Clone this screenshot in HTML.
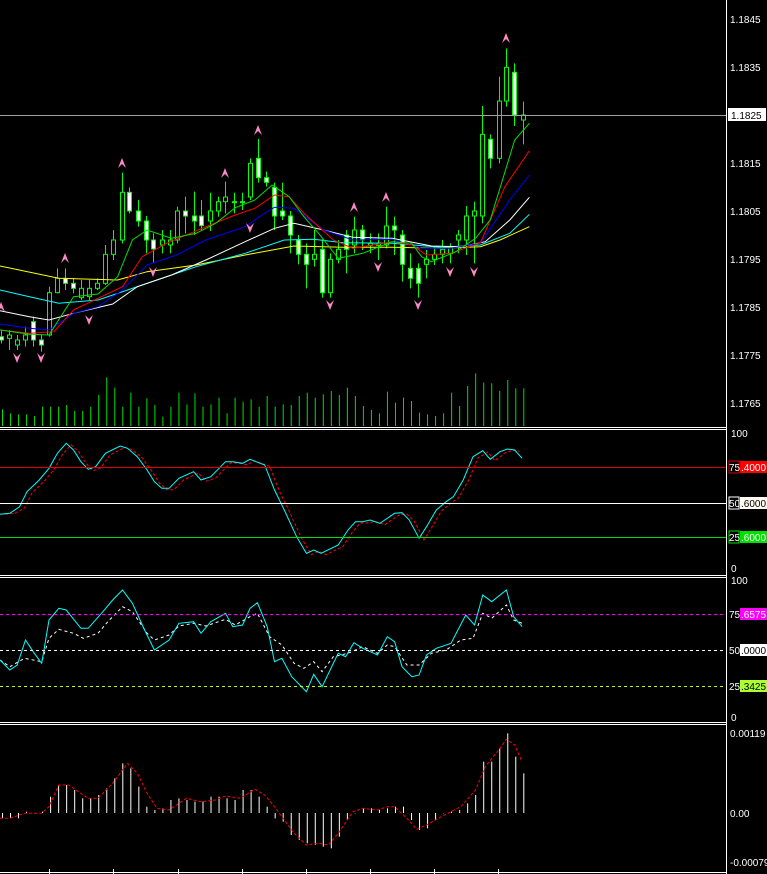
<!DOCTYPE html>
<html><head><meta charset="utf-8"><style>
html,body{margin:0;padding:0;background:#000;width:767px;height:874px;overflow:hidden}
svg{display:block}
text{font-family:"Liberation Sans",sans-serif;font-size:10px;fill:#fff}
</style></head><body>
<svg id="s" width="767" height="874" viewBox="0 0 767 874" xmlns="http://www.w3.org/2000/svg">
<rect width="767" height="874" fill="#000"/>
<g id="g"></g>
<line x1="0" y1="427.5" x2="727" y2="427.5" stroke="#fff"/>
<line x1="0" y1="429.5" x2="727" y2="429.5" stroke="#fff"/>
<line x1="0" y1="575.5" x2="727" y2="575.5" stroke="#fff"/>
<line x1="0" y1="577.5" x2="727" y2="577.5" stroke="#fff"/>
<line x1="0" y1="722.5" x2="727" y2="722.5" stroke="#fff"/>
<line x1="0" y1="724.5" x2="727" y2="724.5" stroke="#fff"/>
<line x1="0" y1="872.5" x2="727" y2="872.5" stroke="#fff"/>
<line x1="726.5" y1="0" x2="726.5" y2="874" stroke="#fff"/>
<line x1="0" y1="115.5" x2="726" y2="115.5" stroke="#a0a0a0"/>
<rect x="728" y="108" width="38" height="13" fill="#fff"/>
<text x="731" y="119" style="fill:#000">1.1825</text>
<text x="730" y="23">1.1845</text>
<text x="730" y="71">1.1835</text>
<text x="730" y="167">1.1815</text>
<text x="730" y="215">1.1805</text>
<text x="730" y="263">1.1795</text>
<text x="730" y="311">1.1785</text>
<text x="730" y="359">1.1775</text>
<text x="730" y="407">1.1765</text>
<line x1="0" y1="467.5" x2="726" y2="467.5" stroke="#e00000"/>
<line x1="0" y1="503.5" x2="726" y2="503.5" stroke="#fff"/>
<line x1="0" y1="537.5" x2="726" y2="537.5" stroke="#00e000"/>
<text x="731" y="437">100</text>
<rect x="729" y="461" width="10" height="12" fill="#000" stroke="#e00000"/><text x="729" y="471">75</text>
<rect x="740" y="461" width="27" height="12" fill="#f00"/><text x="741" y="471">.4000</text>
<rect x="729" y="497" width="10" height="12" fill="#000" stroke="#fff"/><text x="729" y="507">50</text>
<rect x="740" y="497" width="27" height="12" fill="#fffbf0"/><text x="741" y="507" style="fill:#000">.6000</text>
<rect x="729" y="531" width="10" height="12" fill="#000" stroke="#00e000"/><text x="729" y="541">25</text>
<rect x="740" y="531" width="27" height="12" fill="#00e000"/><text x="741" y="541">.6000</text>
<text x="731" y="572">0</text>
<line x1="0" y1="614.5" x2="726" y2="614.5" stroke="#ff00ff" stroke-dasharray="3,3"/>
<line x1="0" y1="650.5" x2="726" y2="650.5" stroke="#fff" stroke-dasharray="3,3"/>
<line x1="0" y1="686.5" x2="726" y2="686.5" stroke="#c0ff00" stroke-dasharray="3,3"/>
<text x="731" y="584">100</text>
<text x="729" y="618">75</text><rect x="740" y="608" width="27" height="12" fill="#ff00ff"/><text x="741" y="618">.6575</text>
<text x="729" y="654">50</text><rect x="740" y="644" width="27" height="12" fill="#fff"/><text x="741" y="654" style="fill:#000">.0000</text>
<text x="729" y="690">25</text><rect x="740" y="680" width="27" height="12" fill="#adff2f"/><text x="741" y="690" style="fill:#000">.3425</text>
<text x="731" y="721">0</text>
<text x="730" y="737">0.00119</text>
<text x="730" y="817">0.00</text>
<text x="730" y="866">-0.00079</text>
</svg>
<script>
var g=document.getElementById('g');var NS='http://www.w3.org/2000/svg';
function el(t,a){var e=document.createElementNS(NS,t);for(var k in a)e.setAttribute(k,a[k]);g.appendChild(e);return e;}
function X(i){return 2.5+8.02*i;}
var vt=[1228,1240,1243,1243,1248,1220,1220,1220,1215,1233,1233,1220,1185,1132,1163,1220,1178,1220,1195,1215,1250,1220,1178,1213,1180,1220,1213,1193,1240,1193,1205,1198,1220,1188,1220,1213,1215,1188,1178,1193,1183,1173,1185,1163,1188,1218,1230,1240,1175,1208,1193,1203,1238,1243,1248,1240,1178,1218,1158,1120,1148,1150,1173,1140,1165,1165];
for(var i=0;i<66;i++){el('line',{x1:X(i),x2:X(i),y1:426,y2:vt[i]/3,stroke:'#00e000'});}
var c=[[3,1010,1020,1,990,1030],[19,1005,1015,0,990,1050],[35,1020,1035,0,1005,1050],[52,1005,1020,0,980,1040],[68,965,1020,1,950,1040],[84,1020,1035,1,1005,1055],[100,878,1005,0,860,1010],[117,835,878,0,805,880],[133,835,850,1,805,870],[149,850,865,1,835,880],[166,865,893,0,840,900],[182,865,890,0,840,900],[198,850,865,0,835,870],[215,763,850,0,735,855],[231,720,763,0,690,780],[248,577,720,0,518,730],[264,577,633,1,562,640],[281,633,663,1,600,680],[297,663,720,1,648,760],[313,720,747,1,700,790],[330,720,735,0,690,760],[346,720,735,0,690,760],[362,633,720,0,620,730],[378,633,648,1,590,700],[395,648,663,1,575,705],[411,648,677,1,600,690],[428,633,663,0,578,693],[444,605,633,0,590,650],[460,591,605,0,545,640],[477,605,606,0,578,640],[493,605,606,0,578,630],[510,490,591,0,475,600],[526,475,533,1,417,548],[542,533,547,1,515,560],[558,562,648,1,548,690],[575,633,648,1,548,660],[591,648,705,1,633,760],[608,720,763,1,705,793],[624,763,793,1,730,865],[640,763,778,0,690,800],[656,748,878,1,718,893],[673,778,878,0,760,893],[689,748,778,0,720,790],[705,705,748,1,690,820],[722,690,735,0,650,760],[738,690,720,1,675,750],[754,730,736,0,700,760],[771,730,736,0,700,780],[787,678,735,0,620,745],[803,678,690,1,650,765],[820,705,793,1,690,845],[836,805,835,1,760,865],[853,805,850,1,790,893],[869,778,793,0,750,835],[885,763,778,0,740,795],[902,748,763,0,720,790],[918,740,760,0,730,790],[934,705,720,0,690,760],[951,648,720,0,618,765],[967,633,648,0,605,790],[984,403,648,0,318,670],[1000,418,475,1,403,505],[1017,303,475,0,230,490],[1033,202,303,0,145,320],[1049,217,345,1,190,378],[1066,345,360,0,305,433]];
c.forEach(function(d){var x=Math.round(d[0]/2.04)+0.5;el('line',{x1:x,x2:x,y1:d[4]/3,y2:d[5]/3,stroke:'#00ff00'});var h=Math.max(1,(d[2]-d[1])/3);el('rect',{x:x-2,y:d[1]/3,width:4,height:h,fill:d[3]?'#fff':'#000',stroke:'#00ff00'});});
function pl(pts,col,dash,sx,sy,oy){var s=pts.map(function(p){return (p[0]/sx).toFixed(1)+','+(p[1]/sy+oy).toFixed(1)}).join(' ');var a={points:s,fill:'none',stroke:col,'stroke-width':1};if(dash)a['stroke-dasharray']=dash;el('polyline',a);}
pl([[0,798],[120,835],[240,840],[300,815],[400,795],[500,765],[600,738],[700,742],[800,742],[900,745],[980,740],[1020,720],[1080,680]],'#ffff00',0,2.04,3,0);
pl([[0,870],[60,890],[120,910],[200,900],[260,870],[320,840],[400,800],[500,760],[580,720],[640,718],[700,728],[800,730],[900,742],[980,735],[1040,700],[1080,643]],'#00ffff',0,2.04,3,0);
pl([[0,932],[60,950],[100,960],[150,940],[230,912],[280,860],[350,825],[420,780],[500,725],[560,685],[600,670],[660,690],[720,712],[800,715],[880,738],[940,740],[990,725],[1040,660],[1080,592]],'#ffffff',0,2.04,3,0);
pl([[0,972],[60,985],[100,990],[150,940],[200,920],[250,870],[300,795],[360,765],[420,720],[500,680],[540,640],[560,622],[600,625],[660,690],[720,720],[800,718],[860,745],[920,745],[980,730],[1040,600],[1080,525]],'#0000ff',0,2.04,3,0);
pl([[0,990],[60,1000],[110,995],[150,930],[200,895],[250,860],[290,770],[340,730],[420,680],[480,645],[520,625],[560,585],[590,590],[620,640],[680,720],[720,745],[800,725],[840,735],[870,765],[920,760],[980,728],[1030,560],[1080,452]],'#ff0000',0,2.04,3,0);
pl([[0,990],[60,1003],[100,1005],[150,890],[200,882],[240,830],[270,720],[300,690],[350,715],[400,700],[440,670],[480,623],[520,600],[555,555],[590,590],[620,650],[650,700],[690,775],[740,760],[800,725],[840,730],[860,770],[880,785],[930,755],[970,715],[1000,660],[1050,420],[1080,370]],'#00e000',0,2.04,3,0);
function up(x,y){el('path',{d:'M'+(x-4)+','+(y+5)+' L'+x+','+(y-5)+' L'+(x+4)+','+(y+5)+' L'+x+','+(y+1)+' Z',fill:'#ff88c8'});}
function dn(x,y){el('path',{d:'M'+(x-4)+','+(y-5)+' L'+x+','+(y+5)+' L'+(x+4)+','+(y-5)+' L'+x+','+(y-1)+' Z',fill:'#ff88c8'});}
[[122,163],[65,258],[225,173],[258,130],[354,207],[386,197],[506,38],[1,307]].forEach(function(p){up(p[0],p[1]);});
[[17,358],[41,358],[89,320],[153,272],[250,228],[330,305],[378,267],[418,305],[450,272],[474,272]].forEach(function(p){dn(p[0],p[1]);});
var cy=[[0,283],[20,280],[40,260],[55,215],[80,180],[100,145],[117,100],[135,70],[150,90],[165,125],[180,148],[195,140],[215,100],[245,78],[260,85],[280,110],[300,150],[315,185],[330,205],[345,205],[365,175],[395,155],[410,180],[430,170],[460,125],[475,125],[495,130],[510,118],[540,135],[560,210],[580,270],[605,350],[625,400],[640,390],[655,400],[690,375],[710,330],[725,305],[740,305],[755,300],[775,310],[805,280],[820,278],[835,300],[855,355],[870,320],[890,270],[910,245],[925,230],[945,180],[965,110],[985,92],[1000,118],[1020,95],[1035,87],[1050,90],[1065,115]];
pl(cy.map(function(p){return [p[0]+10,p[1]+(p[0]<30?0:4)]}).filter(function(p){return p[0]<1070}),'#ff0000','3,2',2.04,3,420);
pl(cy,'#00ffff',0,2.04,3,420);
var c3=[[0,720],[20,750],[35,735],[52,660],[70,700],[85,730],[100,600],[120,565],[135,570],[165,625],[180,625],[210,575],[230,540],[250,510],[270,550],[295,630],[315,690],[345,660],[365,610],[395,605],[410,640],[430,605],[460,580],[475,620],[495,615],[510,565],[525,548],[545,620],[560,725],[575,715],[595,770],[625,815],[640,763],[657,800],[690,700],[705,710],[722,668],[740,685],[770,705],[790,650],[805,665],[820,740],[840,770],[855,765],[870,705],[890,685],[920,670],[950,585],[968,615],[985,525],[1003,545],[1033,510],[1048,590],[1065,620]];
var w3=[[0,720],[20,740],[50,715],[85,725],[100,655],[120,628],[150,640],[170,655],[200,640],[220,605],[250,560],[270,575],[300,640],[315,660],[345,645],[365,618],[395,610],[420,618],[460,598],[480,615],[510,590],[525,580],[550,650],[575,675],[600,730],[620,745],[640,725],[657,755],[680,710],[710,700],[740,680],[770,700],[790,675],[805,680],[830,735],[855,735],[880,700],[910,690],[940,660],[965,655],[985,580],[1003,595],[1033,555],[1048,600],[1065,610]];
pl(w3,'#ffffff','3,3',2.04,3,420);
pl(c3,'#00ffff',0,2.04,3,420);
var m=[1195,1195,1195,1175,1180,1175,1130,1095,1095,1110,1135,1135,1125,1105,1075,1030,1045,1100,1160,1170,1165,1140,1135,1140,1145,1145,1130,1130,1135,1140,1110,1110,1130,1160,1195,1205,1245,1260,1270,1275,1280,1285,1250,1200,1180,1165,1165,1170,1165,1160,1160,1200,1230,1225,1200,1180,1175,1170,1150,1125,1025,1025,985,940,1010,1060];
for(var i=0;i<66;i++){el('line',{x1:X(i),x2:X(i),y1:813,y2:m[i]/3+420,stroke:'#fff'});}
var sg=[[0,1195],[20,1195],[50,1180],[85,1180],[100,1160],[120,1095],[140,1095],[180,1135],[200,1135],[230,1090],[260,1030],[280,1060],[300,1120],[320,1165],[345,1170],[380,1135],[410,1145],[440,1140],[460,1128],[490,1135],[520,1108],[540,1125],[560,1160],[580,1200],[600,1240],[625,1275],[650,1270],[670,1275],[690,1240],[720,1175],[740,1165],[770,1170],[790,1160],[805,1160],[830,1195],[850,1228],[870,1215],[900,1190],[940,1160],[970,1110],[990,1040],[1020,985],[1033,958],[1050,975],[1065,1025]];
pl(sg,'#ff0000','3,2',2.04,3,420);
[49,113,178,242,306,370,434,498].forEach(function(x){el('line',{x1:x+0.5,x2:x+0.5,y1:869,y2:874,stroke:'#fff'});});
</script>
</body></html>
